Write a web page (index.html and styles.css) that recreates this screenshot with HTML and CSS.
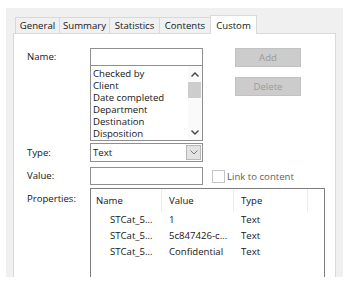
FILE: index.html
```html
<!DOCTYPE html>
<html lang="en">
<head>
    <meta charset="UTF-8">
    <title>Properties - Custom</title>
    <link rel="stylesheet" href="styles.css">
</head>
<body>

    <div class="dialog">
        <!-- TABS -->
        <div class="tabs">
            <div class="tab tab-general">General</div>
            <div class="tab tab-summary">Summary</div>
            <div class="tab tab-stats">Statistics</div>
            <div class="tab tab-contents">Contents</div>
            <div class="tab tab-custom active">Custom</div>
        </div>

        <!-- CUSTOM PAGE -->
        <div class="panel">
            <div class="row row-name">
                <div class="lbl">Name:</div>
                <div class="name-col">
                    <div class="field"></div>
                    <div class="listbox">
                        <ul class="items">
                            <li>Checked by</li>
                            <li>Client</li>
                            <li>Date completed</li>
                            <li>Department</li>
                            <li>Destination</li>
                            <li>Disposition</li>
                        </ul>
                        <div class="vscroll">
                            <div class="sb-btn">
                                <svg width="8" height="5" viewBox="0 0 8 5"><path d="M0.5 4.5 L4 1 L7.5 4.5" fill="none" stroke="#444" stroke-width="1.4"/></svg>
                            </div>
                            <div class="thumb"></div>
                            <div class="sb-space"></div>
                            <div class="sb-btn">
                                <svg width="8" height="5" viewBox="0 0 8 5"><path d="M0.5 0.5 L4 4 L7.5 0.5" fill="none" stroke="#444" stroke-width="1.4"/></svg>
                            </div>
                        </div>
                    </div>
                </div>
                <div class="actions">
                    <button class="btn btn-add" disabled>Add</button>
                    <button class="btn btn-delete" disabled>Delete</button>
                </div>
            </div>

            <div class="row row-type">
                <div class="lbl">Type:</div>
                <div class="combo">
                    <span class="combo-text">Text</span>
                    <span class="drop">
                        <svg width="8" height="5" viewBox="0 0 8 5"><path d="M0.5 0.5 L4 4 L7.5 0.5" fill="none" stroke="#777" stroke-width="1"/></svg>
                    </span>
                </div>
            </div>

            <div class="row row-value">
                <div class="lbl">Value:</div>
                <div class="field field-value"></div>
                <div class="link">
                    <span class="check"></span>
                    <span>Link to content</span>
                </div>
            </div>

            <div class="row row-props">
                <div class="lbl">Properties:</div>
                <div class="listview">
                    <div class="lv-head">
                        <div class="col col-name">Name</div>
                        <div class="col col-value">Value</div>
                        <div class="col col-type">Type</div>
                    </div>
                    <div class="lv-row">
                        <div class="col col-name">STCat_5...</div>
                        <div class="col col-value">1</div>
                        <div class="col col-type">Text</div>
                    </div>
                    <div class="lv-row">
                        <div class="col col-name">STCat_5...</div>
                        <div class="col col-value">5c847426-c...</div>
                        <div class="col col-type">Text</div>
                    </div>
                    <div class="lv-row">
                        <div class="col col-name">STCat_5...</div>
                        <div class="col col-value">Confidential</div>
                        <div class="col col-type">Text</div>
                    </div>
                </div>
            </div>
        </div>
    </div>

</body>
</html>
```

FILE: styles.css
```css
/* --- General --- */
* {
    box-sizing: border-box;
}

body {
    margin: 0;
    background-color: #fff;
    font-family: 'Open Sans', 'Noto Sans', sans-serif;
    font-size: 9.6px;
    color: #161616;
}

.dialog {
    margin: 8px 0 0 6px;
    width: 337px;
    height: 269px;
    padding: 7px 7px 0 7px;
    background-color: #f0f0f0;
    overflow: hidden;
}

/* --- Tabs --- */
.tabs {
    display: flex;
    height: 18px;
    padding-left: 2px;
    position: relative;
    z-index: 1;
}

.tab {
    height: 16px;
    margin-top: 2px;
    border: 1px solid #d9d9d9;
    border-left: none;
    border-bottom: none;
    text-align: center;
    line-height: 16px;
    background-color: #f0f0f0;
}
.tab-general { width: 45px; border-left: 1px solid #d9d9d9; }
.tab-summary { width: 50px; }
.tab-stats { width: 50px; }
.tab-contents { width: 51px; }

.tab.active {
    width: 47px;
    height: 19px;
    margin-top: 0;
    margin-left: -1px;
    border-left: 1px solid #d9d9d9;
    background-color: #fff;
    line-height: 19px;
}

.panel {
    height: 260px;
    background-color: #fff;
    border: 1px solid #d9d9d9;
    padding: 14px 0 0 13px;
}

/* --- Form rows --- */
.row {
    display: flex;
    align-items: flex-start;
}

.lbl {
    width: 63px;
    flex: none;
    line-height: 18px;
}

.field {
    width: 113px;
    height: 18px;
    border: 1px solid #8f8f8f;
    background: #fff;
}

.name-col {
    width: 113px;
    flex: none;
}

.listbox {
    display: flex;
    height: 76px;
    margin-top: -1px;
    border: 1px solid #8f8f8f;
}

.items {
    list-style: none;
    margin: 0;
    padding: 2px 0 0 2px;
    flex: 1;
    line-height: 12px;
}

.vscroll {
    width: 14px;
    display: flex;
    flex-direction: column;
    background-color: #fafafa;
}
.sb-btn {
    height: 16px;
    display: flex;
    align-items: center;
    justify-content: center;
}
.thumb {
    height: 16px;
    margin: 0 1px 0 0;
    background-color: #cdcdcd;
}
.sb-space {
    flex: 1;
}

.actions {
    margin-left: 32px;
    display: flex;
    flex-direction: column;
    gap: 10px;
}

.btn {
    width: 66px;
    height: 19px;
    padding: 0;
    border: 1px solid #c2c2c2;
    background-color: #cccccc;
    color: #9a9a9a;
    font-family: inherit;
    font-size: 9.6px;
}

/* Type */
.row-type {
    margin-top: 2px;
}
.row-type .lbl {
    line-height: 19px;
}

.combo {
    width: 113px;
    height: 19px;
    border: 1px solid #8f8f8f;
    display: flex;
    align-items: center;
    padding: 1px 1px 1px 2px;
}
.combo-text {
    flex: 1;
}
.drop {
    width: 15px;
    height: 100%;
    display: flex;
    align-items: center;
    justify-content: center;
    background-color: #e3e3e3;
    border: 1px solid #b8b8b8;
}

/* Value */
.row-value {
    margin-top: 5px;
}

.link {
    margin-left: 9px;
    display: flex;
    align-items: center;
    height: 18px;
    color: #5e5e5e;
}
.check {
    width: 13px;
    height: 13px;
    border: 1px solid #c4c4c4;
    background: #fff;
    margin-right: 2px;
}

/* Properties */
.row-props {
    margin-top: 3px;
}
.row-props .lbl {
    padding-top: 2px;
}

.listview {
    width: 235px;
    height: 110px;
    border: 1px solid #7d7d7d;
}

.lv-head,
.lv-row {
    display: flex;
}

.lv-head {
    height: 23px;
    line-height: 23px;
}
.lv-head .col {
    border-right: 1px solid #ececec;
}

.lv-row {
    height: 16px;
    line-height: 16px;
}

.col {
    flex: none;
    padding-left: 7px;
    white-space: nowrap;
}
.col-name { width: 71px; padding-left: 5px; }
.col-value { width: 72px; }
.col-type { width: 74px; }

.lv-row .col-name {
    padding-left: 19px;
}
```
